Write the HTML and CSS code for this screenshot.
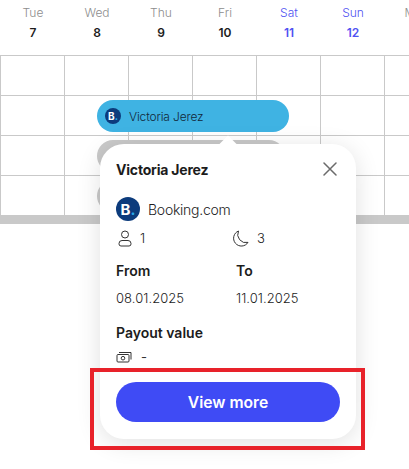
FILE: index.html
```html
<!DOCTYPE html>
<html lang="en">
<head>
    <meta charset="UTF-8">
    <meta name="viewport" content="width=device-width, initial-scale=1.0">
    <title>Booking calendar</title>
    <link rel="stylesheet" href="styles.css">
</head>
<body>

<div class="calendar">
    <div class="days">
        <div class="day"><span class="dayName">Tue</span><strong>7</strong></div>
        <div class="day"><span class="dayName">Wed</span><strong>8</strong></div>
        <div class="day"><span class="dayName">Thu</span><strong>9</strong></div>
        <div class="day"><span class="dayName">Fri</span><strong>10</strong></div>
        <div class="day weekend"><span class="dayName">Sat</span><strong>11</strong></div>
        <div class="day weekend"><span class="dayName">Sun</span><strong>12</strong></div>
        <div class="day"><span class="dayName">Mon</span></div>
    </div>

    <div class="grid">
        <div class="cell"></div><div class="cell"></div><div class="cell"></div><div class="cell"></div><div class="cell"></div><div class="cell"></div><div class="cell"></div>
        <div class="cell"></div><div class="cell"></div><div class="cell"></div><div class="cell"></div><div class="cell"></div><div class="cell"></div><div class="cell"></div>
        <div class="cell"></div><div class="cell"></div><div class="cell"></div><div class="cell"></div><div class="cell"></div><div class="cell"></div><div class="cell"></div>
        <div class="cell"></div><div class="cell"></div><div class="cell"></div><div class="cell"></div><div class="cell"></div><div class="cell"></div><div class="cell"></div>
    </div>
    <div class="band"></div>

    <div class="pill pillActive">
        <span class="logo logoSmall">B<i>.</i></span>
        <span>Victoria Jerez</span>
    </div>
    <div class="pill pillGray pillSecond"></div>
    <div class="pill pillGray pillThird"></div>

    <div class="popup">
        <div class="notch"></div>
        <div class="popupHead">
            <h2>Victoria Jerez</h2>
            <svg class="closeIcon" width="14" height="14" viewBox="0 0 14 14" fill="none" stroke="#6b6b6b" stroke-width="1.5" stroke-linecap="round">
                <path d="M1 1l12 12M13 1L1 13"/>
            </svg>
        </div>

        <div class="source">
            <span class="logo">B<i>.</i></span>
            <span>Booking.com</span>
        </div>

        <div class="counts">
            <div class="count">
                <svg width="14" height="17" viewBox="0 0 14 17" fill="none" stroke="#333" stroke-width="1">
                    <circle cx="7" cy="4.5" r="3.5"/>
                    <path d="M4 10.5h6a3 3 0 0 1 3 3v.5a2 2 0 0 1-2 2H3a2 2 0 0 1-2-2v-.5a3 3 0 0 1 3-3z"/>
                </svg>
                <span>1</span>
            </div>
            <div class="count">
                <svg width="17" height="17" viewBox="0 0 17 17" fill="none" stroke="#333" stroke-width="1">
                    <path d="M6.5 1A7.8 7.8 0 1 0 16 12.4 8.2 8.2 0 0 1 6.5 1z"/>
                </svg>
                <span>3</span>
            </div>
        </div>

        <div class="dates">
            <div>
                <h3>From</h3>
                <p>08.01.2025</p>
            </div>
            <div>
                <h3>To</h3>
                <p>11.01.2025</p>
            </div>
        </div>

        <h3 class="payoutLabel">Payout value</h3>
        <div class="payout">
            <svg width="16" height="12" viewBox="0 0 16 12" fill="none" stroke="#333" stroke-width="1">
                <path d="M3 1.5h12v7"/>
                <rect x="1" y="3.5" width="12" height="7.5" rx="1"/>
                <circle cx="7" cy="7.2" r="1.8"/>
            </svg>
            <span>-</span>
        </div>

        <button class="btn">View more</button>
    </div>

    <div class="highlight"></div>
</div>

</body>
</html>
```

FILE: styles.css
```css
* {
    box-sizing: border-box;
}
body {
    margin: 0;
    background-color: #fff;
    font-family: Inter, "Noto Sans", sans-serif;
    color: #222;
    overflow: hidden;
}
.calendar {
    position: relative;
    width: 409px;
    height: 469px;
    overflow: hidden;
}
.days {
    display: flex;
    height: 55px;
    width: 449px;
    padding: 5px 0 0 1px;
}
.day {
    flex: 0 0 64px;
    display: flex;
    flex-direction: column;
    align-items: center;
    gap: 5px;
    font-size: 12px;
    line-height: 15px;
}
.dayName {
    color: #8d8d8d;
    font-size: 12px;
    font-weight: 300;
}
.day strong {
    font-weight: 600;
    color: #1c1c1c;
}
.weekend .dayName,
.weekend strong {
    color: #5052f2;
}
.grid {
    display: grid;
    grid-template-columns: repeat(7, 64px);
    grid-auto-rows: 40px;
    width: 448px;
}
.cell {
    border-top: 1px solid #c9c9c9;
    border-left: 1px solid #c9c9c9;
}
.band {
    height: 9px;
    background-color: #c9c9c9;
}
.pill {
    position: absolute;
    left: 97px;
    height: 32px;
    border-radius: 16px;
}
.pillActive {
    top: 100px;
    width: 192px;
    padding-left: 8px;
    display: flex;
    align-items: center;
    gap: 8px;
    background-color: #3fb3e3;
    color: #12283a;
    font-size: 12px;
    font-weight: 300;
    letter-spacing: -0.15px;
}
.pillGray {
    width: 188px;
    background-color: #c9c9c9;
}
.pillSecond {
    top: 140px;
}
.pillThird {
    top: 180px;
}
.logo {
    flex: none;
    display: flex;
    align-items: center;
    justify-content: center;
    width: 24px;
    height: 24px;
    border-radius: 50%;
    background-color: #0c3b7c;
    color: #fff;
    font-size: 15px;
    font-weight: 700;
    line-height: 1;
    letter-spacing: 0;
}
.logo i {
    font-style: normal;
    color: #2aa7e8;
}
.logoSmall {
    width: 16px;
    height: 16px;
    font-size: 10px;
}
.popup {
    position: absolute;
    top: 144px;
    left: 100px;
    width: 256px;
    height: 295px;
    padding: 16px;
    background-color: #fff;
    border-radius: 24px;
    box-shadow: 0 4px 24px rgba(0, 0, 0, 0.12);
}
.notch {
    position: absolute;
    top: -6px;
    left: 122px;
    width: 12px;
    height: 12px;
    background-color: #fff;
    transform: rotate(45deg);
}
.popupHead {
    position: relative;
    display: flex;
    align-items: center;
    justify-content: space-between;
    height: 18px;
    padding-right: 3px;
}
h2 {
    margin: 0;
    font-size: 14px;
    font-weight: 700;
    letter-spacing: -0.2px;
    color: #1c1c1c;
}
h3 {
    margin: 0;
    font-size: 14px;
    line-height: 16px;
    font-weight: 600;
    color: #1c1c1c;
}
.source {
    display: flex;
    align-items: center;
    gap: 8px;
    margin-top: 19px;
    font-size: 14px;
    font-weight: 300;
    letter-spacing: -0.25px;
    color: #1c1c1c;
}
.counts {
    display: grid;
    grid-template-columns: 114px 1fr;
    margin-top: 8px;
    font-size: 13px;
    font-weight: 300;
    color: #1c1c1c;
}
.count {
    display: flex;
    align-items: center;
    gap: 8px;
    height: 18px;
    padding-left: 2px;
}
.dates {
    display: grid;
    grid-template-columns: 120px 1fr;
    margin-top: 16px;
}
.dates p {
    margin: 11px 0 0;
    font-size: 13px;
    line-height: 16px;
    font-weight: 300;
    letter-spacing: 0.05px;
    color: #1c1c1c;
}
.payoutLabel {
    margin-top: 19px;
}
.payout {
    display: flex;
    align-items: center;
    gap: 9px;
    margin-top: 8px;
    height: 16px;
    font-size: 13px;
    color: #333;
}
.btn {
    display: block;
    width: 224px;
    height: 40px;
    margin-top: 17px;
    background-color: #3f4bf5;
    color: #fff;
    border: none;
    border-radius: 20px;
    font-family: inherit;
    font-size: 15.7px;
    font-weight: 600;
}
.highlight {
    position: absolute;
    top: 368px;
    left: 90px;
    width: 275px;
    height: 82px;
    border: 4px solid #e8222a;
}
```
